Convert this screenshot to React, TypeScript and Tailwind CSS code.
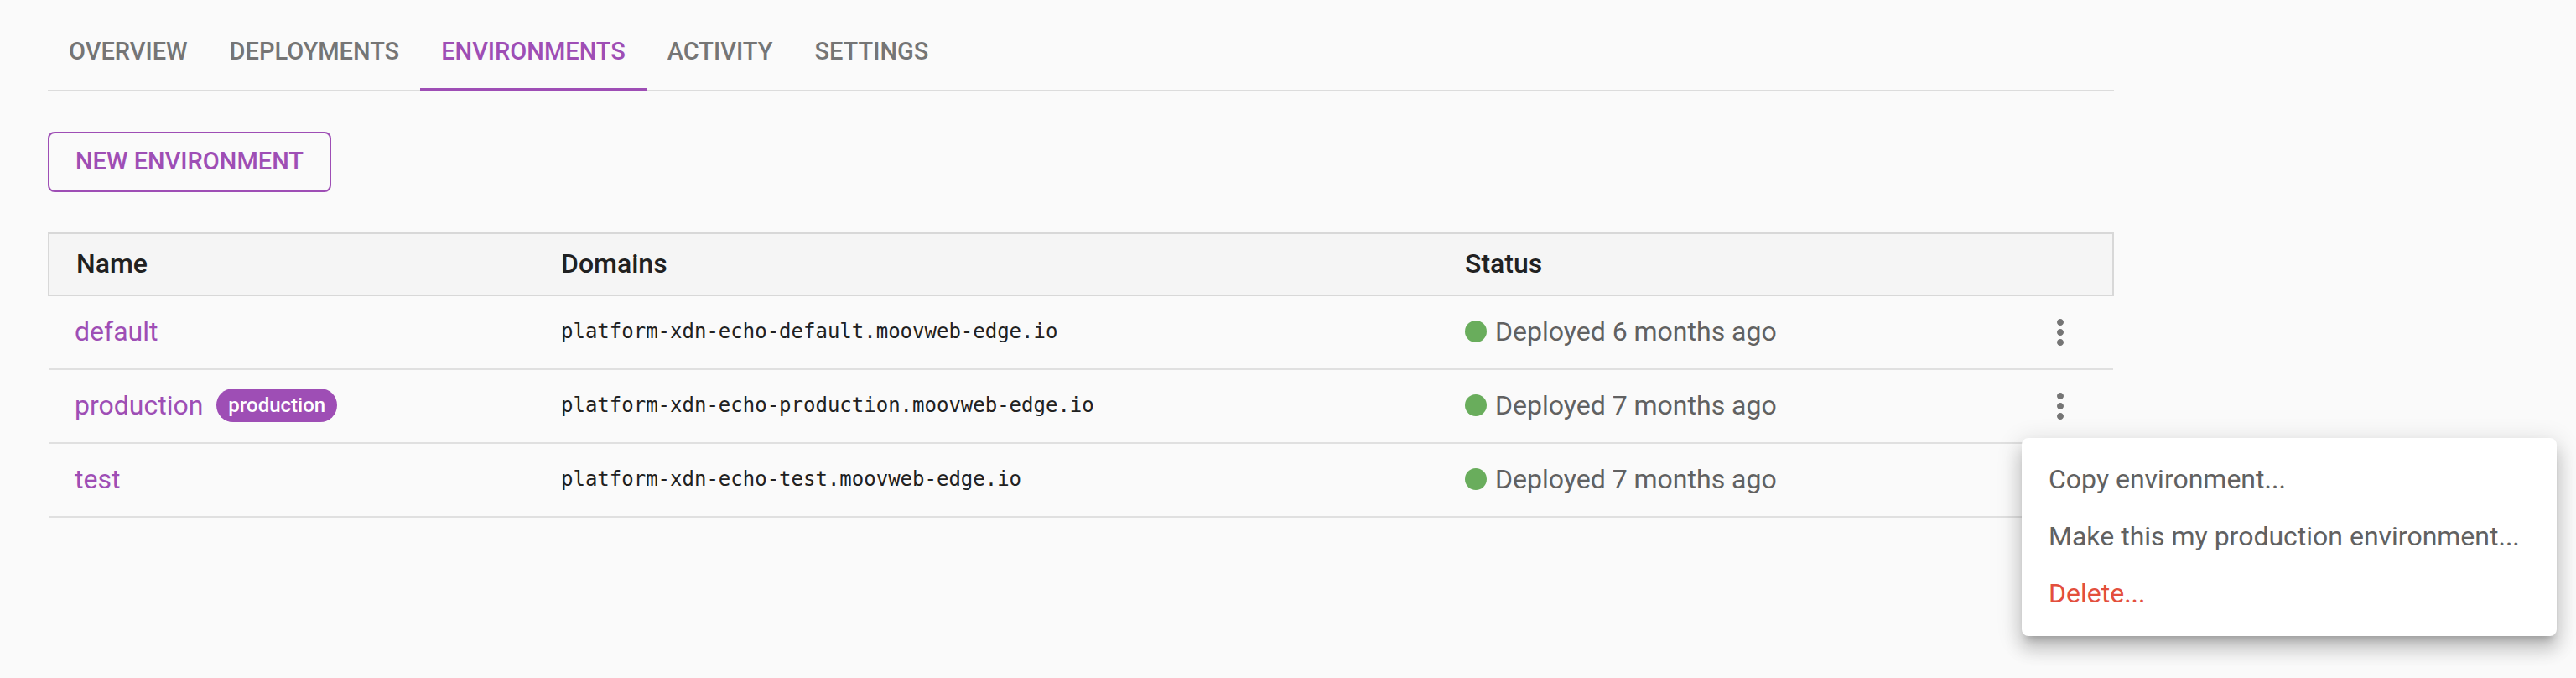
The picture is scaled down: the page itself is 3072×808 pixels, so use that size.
import { MdMoreVert } from "react-icons/md";

const tabs = ["Overview", "Deployments", "Environments", "Activity", "Settings"];

type Environment = {
  name: string;
  domain: string;
  status: string;
  production?: boolean;
  menuOpen?: boolean;
};

const environments: Environment[] = [
  { name: "default", domain: "platform-xdn-echo-default.moovweb-edge.io", status: "Deployed 6 months ago" },
  {
    name: "production",
    domain: "platform-xdn-echo-production.moovweb-edge.io",
    status: "Deployed 7 months ago",
    production: true,
    menuOpen: true,
  },
  { name: "test", domain: "platform-xdn-echo-test.moovweb-edge.io", status: "Deployed 7 months ago" },
];

function Tabs() {
  return (
    <nav className="flex border-b-2 border-[#dcdcdc]">
      {tabs.map((tab) => {
        const active = tab === "Environments";
        return (
          <a
            key={tab}
            href={`#${tab.toLowerCase()}`}
            aria-current={active ? "page" : undefined}
            className={
              "-mb-0.5 border-b-4 px-[25px] pt-[25px] pb-[27px] text-[29px] leading-[34px] font-medium uppercase " +
              (active ? "border-[#9e4eb5] text-[#9e4eb5]" : "border-transparent text-[#757575]")
            }
          >
            {tab}
          </a>
        );
      })}
    </nav>
  );
}

function RowMenu() {
  return (
    <div
      role="menu"
      className="absolute top-[62px] -left-[22px] z-10 min-w-[638px] rounded-lg bg-white py-4 shadow-[0_10px_10px_-6px_rgba(0,0,0,0.2),0_16px_20px_2px_rgba(0,0,0,0.14),0_6px_28px_4px_rgba(0,0,0,0.12)]"
    >
      {["Copy environment...", "Make this my production environment...", "Delete..."].map((item) => (
        <button
          key={item}
          role="menuitem"
          type="button"
          className={
            "block w-full px-8 pt-[11px] pb-[13px] text-left leading-[44px] whitespace-nowrap " +
            (item === "Delete..." ? "text-[#e34f3d]" : "text-[#616161]")
          }
        >
          {item}
        </button>
      ))}
    </div>
  );
}

function EnvironmentRow({ env }: { env: Environment }) {
  return (
    <tr className="h-[88px] border-b-2 border-[#e0e0e0]">
      <td className="px-[31px] pb-0.5">
        <div className="flex items-center gap-4">
          <a href={`#${env.name}`} className="text-[#9e4eb5]">
            {env.name}
          </a>
          {env.production && (
            <span className="rounded-full bg-[#9e4eb5] px-3.5 text-[24px] leading-10 font-medium text-white">
              production
            </span>
          )}
        </div>
      </td>
      <td className="px-[31px] pb-0.5 font-['DejaVu_Sans_Mono',monospace] text-[24px] text-[#212121]">{env.domain}</td>
      <td className="px-[31px] pb-0.5 text-[#616161]">
        <div className="flex items-center gap-2.5">
          <span className="size-[26px] rounded-full bg-[#69ad5c]" />
          {env.status}
        </div>
      </td>
      <td className="pr-[39px]">
        <div className="relative ml-auto size-12">
          <button type="button" aria-label={`Actions for ${env.name}`} className="block text-[#757575]">
            <MdMoreVert size={48} />
          </button>
          {env.menuOpen && <RowMenu />}
        </div>
      </td>
    </tr>
  );
}

export default function App() {
  return (
    <main className="min-h-screen overflow-x-hidden bg-[#fafafa] px-[57px] pt-[19px] font-[Roboto,sans-serif] text-[32px]">
      <div className="max-w-[2464px]">
        <Tabs />
        <button
          type="button"
          className="mt-12 block h-[72px] rounded-lg border-2 border-[#9e4eb5] px-[31px] text-[29px] font-medium text-[#9e4eb5] uppercase"
        >
          New environment
        </button>
        <table className="mt-12 w-full table-fixed border-collapse">
          <colgroup>
            <col className="w-[580px]" />
            <col className="w-[1078px]" />
            <col />
            <col className="w-48" />
          </colgroup>
          <thead>
            <tr className="h-[74px] border-2 border-[#d8d8d8] bg-[#f5f5f5] text-left text-[#212121]">
              <th className="px-[31px] pb-0.5 font-medium first:pl-8">Name</th>
              <th className="px-[31px] pb-0.5 font-medium">Domains</th>
              <th className="px-[31px] pb-0.5 font-medium">Status</th>
              <th aria-label="Actions" />
            </tr>
          </thead>
          <tbody>
            {environments.map((env) => (
              <EnvironmentRow key={env.name} env={env} />
            ))}
          </tbody>
        </table>
      </div>
    </main>
  );
}
